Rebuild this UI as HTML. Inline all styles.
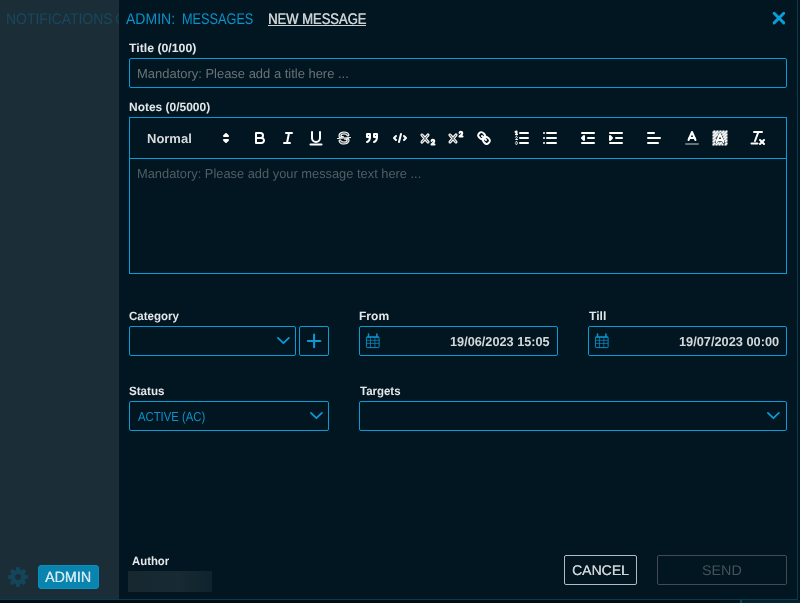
<!DOCTYPE html>
<html lang="en"><head><meta charset="utf-8"><title>New Message</title>
<style>
html,body{margin:0;padding:0;}
body{width:800px;height:603px;overflow:hidden;background:#010e14;position:relative;font-family:"Liberation Sans", sans-serif;}
.ab{position:absolute;}
.tx{position:absolute;white-space:pre;line-height:1;text-rendering:geometricPrecision;transform-origin:0 0;display:block;}
.box{position:absolute;box-sizing:border-box;border:1px solid #069cd6;border-radius:2px;}
.qi{position:absolute;overflow:visible;}
.qi .s{fill:none;stroke:#fff;stroke-width:2;stroke-linecap:round;stroke-linejoin:round;}
.qi .t{stroke-width:1;}
.qi .f, .qi .f *{fill:#606060;stroke:#fff;stroke-width:1.1;}
.qi .f2{fill:#444;}
</style></head><body>
<div class="ab" id="outer" style="left:0;top:0;width:797px;height:599px;background:#011620;border-right:1px solid #073850;border-bottom:1px solid #083c55;"></div>
<div class="ab" style="left:0;top:600px;width:720px;height:3px;background:#010d12;"></div>
<div class="ab" style="left:720px;top:600px;width:20px;height:3px;background:#011219;"></div>
<div class="ab" style="left:740px;top:600px;width:1.5px;height:3px;background:#0b4560;"></div>
<div class="ab" style="left:741.5px;top:600px;width:59px;height:3px;background:#03222f;"></div>
<div class="ab" id="rightstrip" style="left:798px;top:0;width:2px;height:599px;background:#02161f;"></div>
<div class="ab" id="sidebar" style="left:0;top:0;width:119px;height:599px;background:#1b2e38;overflow:hidden;will-change:transform;">
<span class="tx" style="left:5.84px;top:11.64px;font-size:15.0px;font-weight:400;color:#18485f;transform:scale(0.9289,1.03);word-spacing:-1.4px;">NOTIFICATIONS C</span>
<svg class="ab" style="left:6.05px;top:564.9px" width="24" height="24" viewBox="-12 -12 24 24"><g fill="#14465b"><circle r="7.5"/><rect x="-2" y="-9.85" width="4" height="19.7" rx="0.4"/><rect x="-2" y="-9.85" width="4" height="19.7" rx="0.4" transform="rotate(45)"/><rect x="-2" y="-9.85" width="4" height="19.7" rx="0.4" transform="rotate(90)"/><rect x="-2" y="-9.85" width="4" height="19.7" rx="0.4" transform="rotate(135)"/></g><circle r="3" fill="#1b2e38"/></svg>
<div class="ab" style="left:38px;top:565px;width:61px;height:24px;box-sizing:border-box;background:#0884ae;border:1px solid #0a90c0;border-radius:3px;"></div>
<span class="tx" style="left:45.30px;top:570.00px;font-size:15.0px;font-weight:400;color:#d3e8f1;transform:scaleX(0.9516);text-shadow:0.3px 0 0 #d3e8f1;">ADMIN</span>
</div>
<div class="ab" id="dialog" style="left:0;top:0;width:797px;height:599px;will-change:transform;">
<span class="tx" style="left:126.30px;top:11.64px;font-size:15.0px;font-weight:400;color:#0b92cb;transform:scale(0.9346,1.03);">ADMIN:</span><span class="tx" style="left:181.94px;top:11.64px;font-size:15.0px;font-weight:400;color:#0b92cb;transform:scale(0.8474,1.03);">MESSAGES</span><span class="tx" style="left:267.52px;top:11.64px;font-size:15.0px;font-weight:400;color:#ccd1d4;transform:scale(0.8661,1.03);text-shadow:0.55px 0 0 #ccd1d4;">NEW MESSAGE</span>
<div class="ab" style="left:268.2px;top:24.6px;width:97.7px;height:1.2px;background:#ccd1d4;"></div>
<svg class="ab" style="left:770px;top:9px" width="18" height="18" viewBox="0 0 18 18"><path d="M4.150,4.250L13.750,13.850M13.750,4.250L4.150,13.850" stroke="#089fda" stroke-width="2.9" stroke-linecap="round" fill="none"/></svg>
<span class="tx" style="left:128.90px;top:42.00px;font-size:12.0px;font-weight:700;color:#e4e7e9;transform:scaleX(1.0238);">Title (0/100)</span>
<div class="box" style="left:129px;top:58px;width:658px;height:29.500px;"></div>
<span class="tx" style="left:137.40px;top:67.00px;font-size:13.0px;font-weight:400;color:#6a7277;transform:scaleX(0.9969);">Mandatory: Please add a title here ...</span>
<span class="tx" style="left:128.85px;top:101.00px;font-size:12.0px;font-weight:700;color:#e4e7e9;transform:scaleX(0.9975);">Notes (0/5000)</span>
<div class="box" style="left:129px;top:117px;width:658px;height:156.500px;border-radius:0;"></div>
<div class="ab" style="left:130px;top:158px;width:656px;height:1px;background:#069cd6;"></div>
<span class="tx" style="left:146.75px;top:132.00px;font-size:13.0px;font-weight:700;color:#d6dadc;transform:scaleX(0.9988);">Normal</span><svg class="qi" style="left:217.0px;top:128.8px" viewBox="0 0 18 18" width="18" height="18"><polygon class="s" points="7 11 9 13 11 11 7 11"/><polygon class="s" points="7 7 9 5 11 7 7 7"/></svg>
<svg class="qi" style="left:250.7px;top:128.8px" viewBox="0 0 18 18" width="18" height="18"><path class="s" d="M5,4H9.5A2.5,2.5,0,0,1,12,6.5v0A2.5,2.5,0,0,1,9.5,9H5A0,0,0,0,1,5,9V4A0,0,0,0,1,5,4Z"/><path class="s" d="M5,9h5.5A2.5,2.5,0,0,1,13,11.5v0A2.5,2.5,0,0,1,10.500,14H5a0,0,0,0,1,0,0V9A0,0,0,0,1,5,9Z"/></svg><svg class="qi" style="left:278.7px;top:128.8px" viewBox="0 0 18 18" width="18" height="18"><line class="s" x1="7" x2="13" y1="4" y2="4"/><line class="s" x1="5" x2="11" y1="14" y2="14"/><line class="s" x1="8" x2="10" y1="14" y2="4"/></svg><svg class="qi" style="left:306.7px;top:128.8px" viewBox="0 0 18 18" width="18" height="18"><path class="s" d="M5,3V9a4.012,4.012,0,0,0,4,4H9a4.012,4.012,0,0,0,4-4V3"/><rect class="f" height="1" rx="0.5" ry="0.5" width="12" x="3" y="15"/></svg><svg class="qi" style="left:334.7px;top:128.8px" viewBox="0 0 18 18" width="18" height="18"><line class="s t" x1="15.5" x2="2.5" y1="8.5" y2="9.5"/><path class="f" d="M9.007,8C6.542,7.791,6,7.519,6,6.5,6,5.792,7.283,5,9,5c1.571,0,2.765.679,2.969,1.309a1,1,0,0,0,1.900-.617C13.356,4.106,11.354,3,9,3,6.200,3,4,4.538,4,6.500a3.200,3.200,0,0,0,.5,1.843Z"/><path class="f" d="M8.984,10C11.457,10.208,12,10.479,12,11.500c0,.708-1.283,1.500-3,1.500-1.571,0-2.765-.679-2.969-1.309a1,1,0,1,0-1.900.617C4.644,13.894,6.646,15,9,15c2.800,0,5-1.538,5-3.500a3.200,3.200,0,0,0-.5-1.843Z"/></svg><svg class="qi" style="left:362.7px;top:128.8px" viewBox="0 0 18 18" width="18" height="18"><rect class="s f2" height="3" width="3" x="4" y="5"/><rect class="s f2" height="3" width="3" x="11" y="5"/><path class="s f2" d="M7,8c0,4.031-3,5-3,5"/><path class="s f2" d="M14,8c0,4.031-3,5-3,5"/></svg><svg class="qi" style="left:390.7px;top:128.8px" viewBox="0 0 18 18" width="18" height="18"><polyline class="s" points="5 7 3 9 5 11"/><polyline class="s" points="13 7 15 9 13 11"/><line class="s" x1="10" x2="8" y1="5" y2="13"/></svg><svg class="qi" style="left:418.7px;top:128.8px" viewBox="0 0 18 18" width="18" height="18"><path class="f" d="M15.500,15H13.861a3.858,3.858,0,0,0,1.914-2.975,1.800,1.800,0,0,0-1.600-1.751A1.921,1.921,0,0,0,12.021,11.700a.50013.50013,0,1,0,.957.291h0a.914.914,0,0,1,1.053-.725.810.810,0,0,1,.744.762c0,1.076-1.170,1.870-1.940,2.431A1.456,1.456,0,0,0,12,15.500a.5.5,0,0,0,.5.5h3A.5.5,0,0,0,15.500,15Z"/><path class="f" d="M9.650,5.241a1,1,0,0,0-1.409.108L6,7.964,3.759,5.349A1,1,0,0,0,2.192,6.592Q2.215,6.621,2.241,6.649L4.684,9.500,2.241,12.350A1,1,0,0,0,3.710,13.707q.026-.028.049-.057L6,11.036,8.241,13.650a1,1,0,1,0,1.567-1.243Q9.785,12.378,9.759,12.350L7.316,9.500,9.759,6.651A1,1,0,0,0,9.650,5.241Z"/></svg><svg class="qi" style="left:446.7px;top:128.8px" viewBox="0 0 18 18" width="18" height="18"><path class="f" d="M15.500,7H13.861a4.015,4.015,0,0,0,1.914-2.975,1.800,1.800,0,0,0-1.600-1.751A1.922,1.922,0,0,0,12.021,3.700a.5.5,0,1,0,.957.291.917.917,0,0,1,1.053-.725.810.810,0,0,1,.744.762c0,1.077-1.164,1.925-1.934,2.486A1.423,1.423,0,0,0,12,7.500a.5.5,0,0,0,.5.5h3A.5.5,0,0,0,15.500,7Z"/><path class="f" d="M9.651,5.241a1,1,0,0,0-1.410.108L6,7.964,3.759,5.349a1,1,0,1,0-1.519,1.300L4.683,9.500,2.241,12.350a1,1,0,1,0,1.519,1.300L6,11.036,8.241,13.650a1,1,0,0,0,1.519-1.300L7.317,9.500,9.759,6.651A1,1,0,0,0,9.651,5.241Z"/></svg><svg class="qi" style="left:474.7px;top:128.8px" viewBox="0 0 18 18" width="18" height="18"><line class="s" x1="7" x2="11" y1="7" y2="11"/><path class="s" d="M8.900,4.577a3.476,3.476,0,0,1,.36,4.679A3.476,3.476,0,0,1,4.577,8.900C3.185,7.500,2.035,6.400,4.217,4.217S7.500,3.185,8.900,4.577Z"/><path class="s" d="M13.423,9.100a3.476,3.476,0,0,0-4.679-.36,3.476,3.476,0,0,0,.36,4.679c1.392,1.392,2.500,2.542,4.679.36S14.815,10.500,13.423,9.100Z"/></svg><svg class="qi" style="left:512.7px;top:128.8px" viewBox="0 0 18 18" width="18" height="18"><line class="s" x1="7" x2="15" y1="4" y2="4"/><line class="s" x1="7" x2="15" y1="9" y2="9"/><line class="s" x1="7" x2="15" y1="14" y2="14"/><line class="s t" x1="2.5" x2="4.5" y1="5.5" y2="5.5"/><path class="f" d="M3.500,6A.5.5,0,0,1,3,5.500V3.085l-.276.138A.5.5,0,0,1,2.053,3c-.124-.247-.023-.324.224-.447l1-.5A.5.5,0,0,1,4,2.500v3A.5.5,0,0,1,3.500,6Z"/><path class="s t" d="M4.500,10.500h-2c0-.234,1.850-1.076,1.850-2.234A.959.959,0,0,0,2.500,8.156"/><path class="s t" d="M2.500,14.846a.959.959,0,0,0,1.850-.109A.7.7,0,0,0,3.750,14a.688.688,0,0,0,.6-.736.959.959,0,0,0-1.850-.109"/></svg><svg class="qi" style="left:540.7px;top:128.8px" viewBox="0 0 18 18" width="18" height="18"><line class="s" x1="6" x2="15" y1="4" y2="4"/><line class="s" x1="6" x2="15" y1="9" y2="9"/><line class="s" x1="6" x2="15" y1="14" y2="14"/><line class="s" x1="3" x2="3" y1="4" y2="4"/><line class="s" x1="3" x2="3" y1="9" y2="9"/><line class="s" x1="3" x2="3" y1="14" y2="14"/></svg><svg class="qi" style="left:578.7px;top:128.8px" viewBox="0 0 18 18" width="18" height="18"><line class="s" x1="3" x2="15" y1="14" y2="14"/><line class="s" x1="3" x2="15" y1="4" y2="4"/><line class="s" x1="9" x2="15" y1="9" y2="9"/><polyline class="s" points="5 7 5 11 3 9 5 7"/></svg><svg class="qi" style="left:606.7px;top:128.8px" viewBox="0 0 18 18" width="18" height="18"><line class="s" x1="3" x2="15" y1="14" y2="14"/><line class="s" x1="3" x2="15" y1="4" y2="4"/><line class="s" x1="9" x2="15" y1="9" y2="9"/><polyline class="s f2" points="3 7 3 11 5 9 3 7"/></svg><svg class="qi" style="left:644.7px;top:128.8px" viewBox="0 0 18 18" width="18" height="18"><line class="s" x1="3" x2="15" y1="9" y2="9"/><line class="s" x1="3" x2="13" y1="14" y2="14"/><line class="s" x1="3" x2="9" y1="4" y2="4"/></svg><svg class="qi" style="left:682.7px;top:128.8px" viewBox="0 0 18 18" width="18" height="18"><line class="s" opacity="0.4" x1="3" x2="15" y1="15" y2="15"/><polyline class="s" points="5.5 11 9 3 12.5 11"/><line class="s" x1="11.63" x2="6.38" y1="9" y2="9"/></svg><svg class="qi" style="left:710.7px;top:128.8px" viewBox="0 0 18 18" width="18" height="18"><g class="f"><polygon points="6 6.868 6 6 5 6 5 7 5.942 7 6 6.868"/><polygon points="6.817 5 6 5 6 6 6.380 6 6.817 5"/><polygon points="4 11.439 4 11 3 11 3 12 3.755 12 4 11.439"/><polygon points="4.630 10 4 10 4 11 4.192 11 4.630 10"/><rect height="1" width="1" x="4" y="4"/><rect height="1" width="1" x="2" y="6"/><rect height="1" width="1" x="3" y="5"/><rect height="1" width="1" x="4" y="7"/><rect height="1" width="1" x="2" y="12"/><rect height="1" width="1" x="2" y="9"/><rect height="1" width="1" x="2" y="15"/><rect height="1" width="1" x="3" y="8"/><rect height="1" width="1" x="12" y="2"/><rect height="1" width="1" x="11" y="3"/><rect height="1" width="1" x="2" y="3"/><rect height="1" width="1" x="6" y="2"/><rect height="1" width="1" x="3" y="2"/><rect height="1" width="1" x="5" y="3"/><rect height="1" width="1" x="9" y="2"/><rect height="1" width="1" x="15" y="14"/><rect height="1" width="1" x="13" y="7"/><rect height="1" width="1" x="15" y="5"/><rect height="1" width="1" x="14" y="6"/><rect height="1" width="1" x="15" y="8"/><rect height="1" width="1" x="14" y="9"/><rect height="1" width="1" x="14" y="3"/><rect height="1" width="1" x="15" y="2"/><rect height="1" width="1" x="12" y="5"/><rect height="1" width="1" x="13" y="4"/><rect height="1" width="1" x="9" y="14"/><rect height="1" width="1" x="8" y="15"/><rect height="1" width="1" x="5" y="15"/><rect height="1" width="1" x="11" y="15"/><rect height="1" width="1" x="14" y="15"/><rect height="1" width="1" x="15" y="11"/><path d="M10.832,4.200L11,4.582V4H10.708A1.948,1.948,0,0,1,10.832,4.200Z"/><path d="M7,4.582L7.168,4.200A1.929,1.929,0,0,1,7.292,4H7V4.582Z"/><path d="M8,13H7.683l-.351.800a1.933,1.933,0,0,1-.124.200H8V13Z"/><path d="M9,3H8V3.282A1.985,1.985,0,0,1,9,3Z"/><polygon points="13.447 10.174 13.469 10.225 13.472 10.232 13.808 11 14 11 14 10 13.370 10 13.447 10.174"/><path d="M3.775,14H3v1H4V14.314A1.970,1.970,0,0,1,3.775,14Z"/><polygon points="12 6.868 12 6 11.620 6 12 6.868"/><polygon points="12.933 9 13 9 13 8 12.495 8 12.933 9"/><path d="M6,14.926V15H7V14.316A1.993,1.993,0,0,1,6,14.926Z"/><path d="M10.668,13.800L10.317,13H10v1h.792A1.947,1.947,0,0,1,10.668,13.800Z"/><path d="M14.332,12.200a1.990,1.990,0,0,1,.166.800H15V12H14.245Z"/></g><polyline class="s" points="5.5 13 9 5 12.500 13"/><line class="s" x1="11.63" x2="6.38" y1="11" y2="11"/></svg><svg class="qi" style="left:748.7px;top:128.8px" viewBox="0 0 18 18" width="18" height="18"><line class="s" x1="5" x2="13" y1="3" y2="3"/><line class="s" x1="6" x2="9.35" y1="12" y2="3"/><line class="s" x1="11" x2="15" y1="11" y2="15"/><line class="s" x1="15" x2="11" y1="11" y2="15"/><rect class="f" height="1" rx="0.5" ry="0.5" width="7" x="2" y="14"/></svg>
<span class="tx" style="left:136.81px;top:167.00px;font-size:13.0px;font-weight:400;color:#525d66;transform:scaleX(0.9884);">Mandatory: Please add your message text here ...</span>
<span class="tx" style="left:128.92px;top:310.00px;font-size:12.0px;font-weight:700;color:#e4e7e9;transform:scaleX(0.9612);">Category</span>
<div class="box" style="left:129px;top:326px;width:167px;height:29.600px;"></div>
<svg class="ab" style="left:274.8px;top:335.4px" width="17" height="11" viewBox="0 0 17 11"><polyline points="2.9,2.9 8.4,8.2 13.9,2.9" fill="none" stroke="#0a9ad5" stroke-width="1.8" stroke-linecap="round" stroke-linejoin="round"/></svg>
<div class="box" style="left:299px;top:326px;width:30px;height:29.600px;"></div>
<svg class="ab" style="left:305px;top:332px" width="18" height="18" viewBox="0 0 18 18"><path d="M9.100,2.600V15.200M2.800,8.900H15.400" stroke="#0a9ad5" stroke-width="2" stroke-linecap="round" fill="none"/></svg>
<span class="tx" style="left:358.65px;top:310.00px;font-size:12.0px;font-weight:700;color:#e4e7e9;transform:scaleX(1.0035);">From</span>
<div class="box" style="left:359px;top:326px;width:199px;height:29.600px;"></div>
<svg class="ab" style="left:365.4px;top:332.2px" width="16" height="17" viewBox="0 0 16 17"><g fill="none" stroke="#0a8fc6" stroke-width="0.95"><rect x="1.450" y="4.7" width="12.650" height="10.900" rx="0.7"/><path d="M1.450,8.300H14.100M1.450,11.400H14.100M5.500,5V15.600M9.900,5V15.600" stroke-width="1" opacity="0.72"/><path d="M1.600,5.300H14" stroke-width="1.100"/><path d="M3.500,4.800V2M11.900,4.800V2" stroke-width="1.600" stroke-linecap="round"/></g></svg>
<span class="tx" style="left:450.47px;top:335.00px;font-size:13.0px;font-weight:700;color:#d4d8da;transform:scaleX(0.9777);">19/06/2023 15:05</span>
<span class="tx" style="left:588.80px;top:310.00px;font-size:12.0px;font-weight:700;color:#e4e7e9;transform:scaleX(1.0154);">Till</span>
<div class="box" style="left:588px;top:326px;width:199px;height:29.600px;"></div>
<svg class="ab" style="left:594.4px;top:332.2px" width="16" height="17" viewBox="0 0 16 17"><g fill="none" stroke="#0a8fc6" stroke-width="0.95"><rect x="1.450" y="4.7" width="12.650" height="10.900" rx="0.7"/><path d="M1.450,8.300H14.100M1.450,11.400H14.100M5.500,5V15.600M9.900,5V15.600" stroke-width="1" opacity="0.72"/><path d="M1.600,5.300H14" stroke-width="1.100"/><path d="M3.500,4.800V2M11.900,4.800V2" stroke-width="1.600" stroke-linecap="round"/></g></svg>
<span class="tx" style="left:678.86px;top:335.00px;font-size:13.0px;font-weight:700;color:#d4d8da;transform:scaleX(0.9826);">19/07/2023 00:00</span>
<span class="tx" style="left:128.92px;top:385.00px;font-size:12.0px;font-weight:700;color:#e4e7e9;transform:scaleX(0.9678);">Status</span>
<div class="box" style="left:129px;top:401px;width:200px;height:29.600px;"></div>
<span class="tx" style="left:138.20px;top:410.00px;font-size:13.0px;font-weight:400;color:#0b92cb;transform:scaleX(0.8693);">ACTIVE (AC)</span>
<svg class="ab" style="left:308.2px;top:410.4px" width="17" height="11" viewBox="0 0 17 11"><polyline points="2.9,2.9 8.4,8.2 13.9,2.9" fill="none" stroke="#0a9ad5" stroke-width="1.8" stroke-linecap="round" stroke-linejoin="round"/></svg>
<span class="tx" style="left:359.90px;top:385.00px;font-size:12.0px;font-weight:700;color:#e4e7e9;transform:scaleX(0.9548);">Targets</span>
<div class="box" style="left:359px;top:401px;width:428px;height:29.600px;"></div>
<svg class="ab" style="left:764.9px;top:410.4px" width="17" height="11" viewBox="0 0 17 11"><polyline points="2.9,2.9 8.4,8.2 13.9,2.9" fill="none" stroke="#0a9ad5" stroke-width="1.8" stroke-linecap="round" stroke-linejoin="round"/></svg>
<span class="tx" style="left:131.76px;top:555.00px;font-size:12.0px;font-weight:700;color:#e4e7e9;transform:scaleX(0.9462);">Author</span>
<div class="ab" style="left:128px;top:571px;width:84px;height:21px;background:linear-gradient(90deg,#16272f 0%,#182a34 60%,#0d232d 100%);"></div>
<div class="box" style="left:564px;top:555px;width:73px;height:30px;border-color:#b4bbbf;"></div>
<span class="tx" style="left:571.65px;top:563.00px;font-size:14.0px;font-weight:400;color:#d0d4d6;transform:scaleX(1.0009);text-shadow:0.25px 0 0 #d0d4d6;">CANCEL</span>
<div class="box" style="left:657px;top:555px;width:130px;height:30px;border-color:#414b51;"></div>
<span class="tx" style="left:701.83px;top:563.00px;font-size:14.0px;font-weight:400;color:#46525a;transform:scaleX(1.0240);">SEND</span>
</div>
</body></html>
